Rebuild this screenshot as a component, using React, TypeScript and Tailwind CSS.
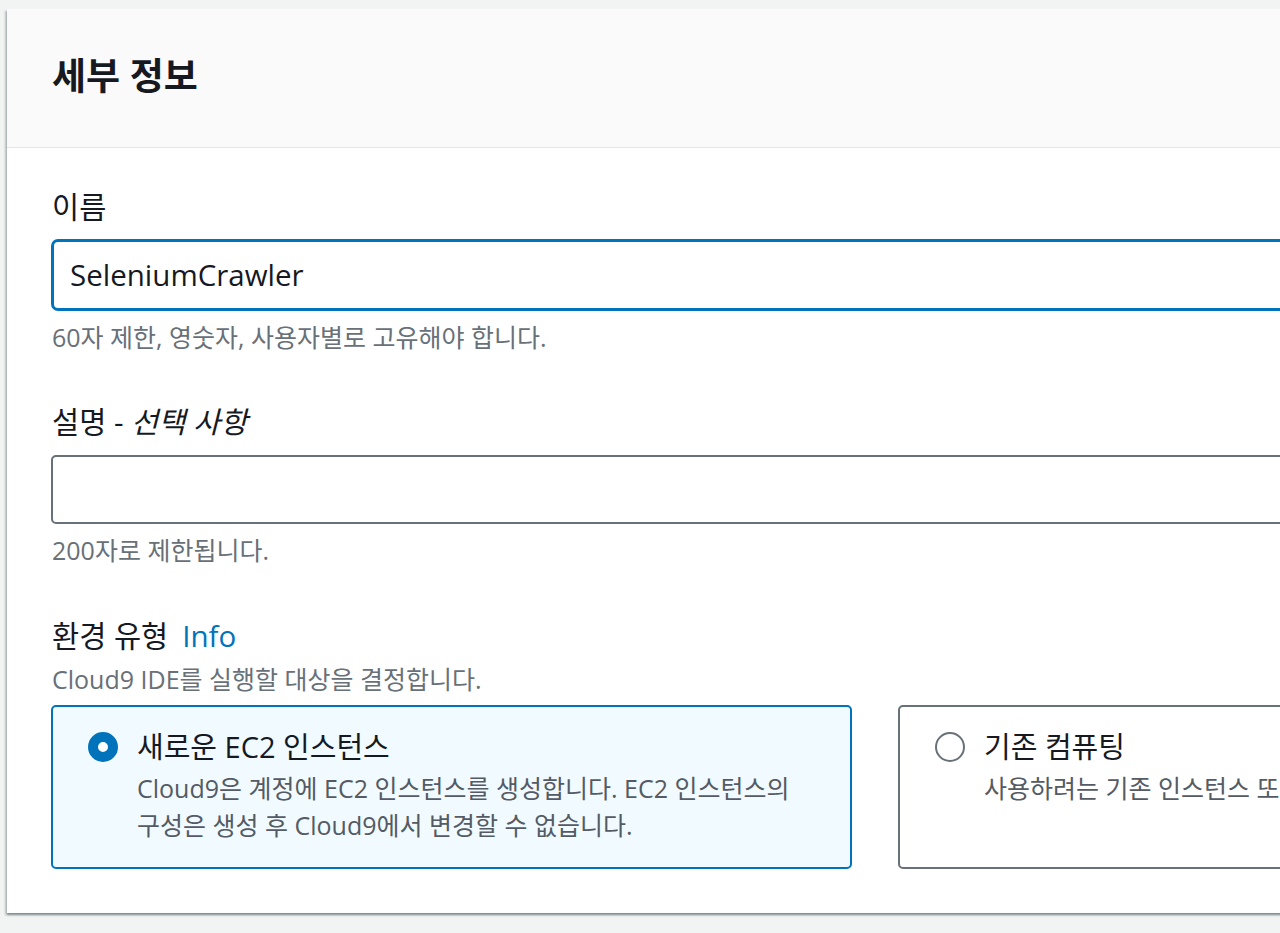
const font = { fontFamily: '"Open Sans", "Noto Sans CJK KR", sans-serif' };

const Radio = ({ checked }: { checked: boolean }) =>
    checked ? (
        <span className="mt-[3px] size-[30px] shrink-0 rounded-full border-[10px] border-[#0073bb] bg-white" />
    ) : (
        <span className="mt-[3px] size-[30px] shrink-0 rounded-full border-2 border-[#687078] bg-white" />
    );

export default function App() {
    return (
        <div className="w-[1280px] h-[933px] overflow-hidden bg-[#f2f3f3] pt-[9px] pl-[7px]" style={font}>
            <div className="w-[1700px] bg-white shadow-[0_2px_2px_0_rgba(0,28,36,0.35),-2px_2px_2px_0_rgba(0,28,36,0.2)]">
                {/* Header */}
                <div className="h-[139px] bg-[#fafafa] border-b border-[#e4e6e6] pl-[45px] pt-[46px]">
                    <h2 className="text-[37px] leading-[42px] font-bold text-[#16191f]">세부 정보</h2>
                </div>

                {/* Body */}
                <div className="pl-[44px] pt-[41px] pb-[44px] text-[#16191f]">
                    <label className="block text-[29.5px] leading-[36px] pl-[1px]">이름</label>
                    <div className="mt-[14px] h-[72px] w-[1400px] rounded-[7px] border-[3px] border-[#0073bb] flex items-center pl-[16px]">
                        <span className="text-[29.5px] leading-[36px] text-[#16191f]">SeleniumCrawler</span>
                    </div>
                    <p className="mt-[10px] text-[25px] leading-[32px] text-[#687078] pl-[1px]">60자 제한, 영숫자, 사용자별로 고유해야 합니다.</p>

                    <label className="mt-[51px] block text-[29.5px] leading-[36px] pl-[1px]">
                        설명 - <i>선택 사항</i>
                    </label>
                    <div className="mt-[15px] h-[69px] w-[1400px] rounded-[5px] border-2 border-[#687078]" />
                    <p className="mt-[10px] text-[25px] leading-[32px] text-[#687078] pl-[1px]">200자로 제한됩니다.</p>

                    <div className="mt-[52px] flex items-center gap-[14px] pl-[1px]">
                        <span className="text-[29.5px] leading-[36px]">환경 유형</span>
                        <a className="text-[29.5px] leading-[36px] text-[#0073bb]">Info</a>
                    </div>
                    <p className="mt-[9px] text-[25px] leading-[32px] text-[#687078] pl-[1px]">Cloud9 IDE를 실행할 대상을 결정합니다.</p>

                    <div className="mt-[10px] grid grid-cols-[801px_801px] gap-[46px]">
                        <div className="h-[164px] rounded-[5px] border-2 border-[#0073bb] bg-[#f1faff] pl-[35px] pt-[22px] flex gap-[19px]">
                            <Radio checked />
                            <div>
                                <div className="text-[29px] leading-[36px] text-[#16191f]">새로운 EC2 인스턴스</div>
                                <div className="mt-[5px] text-[25px] leading-[37px] text-[#545b64] whitespace-nowrap">
                                    Cloud9은 계정에 EC2 인스턴스를 생성합니다. EC2 인스턴스의
                                    <br />
                                    구성은 생성 후 Cloud9에서 변경할 수 없습니다.
                                </div>
                            </div>
                        </div>
                        <div className="h-[164px] rounded-[5px] border-2 border-[#687078] bg-white pl-[35px] pt-[22px] flex gap-[19px]">
                            <Radio checked={false} />
                            <div>
                                <div className="text-[29px] leading-[36px] text-[#16191f]">기존 컴퓨팅</div>
                                <div className="mt-[5px] text-[25px] leading-[37px] text-[#545b64] whitespace-nowrap">
                                    사용하려는 기존 인스턴스 또는 서버에서 Cloud9을 실행합니다.
                                </div>
                            </div>
                        </div>
                    </div>
                </div>
            </div>
        </div>
    );
}
